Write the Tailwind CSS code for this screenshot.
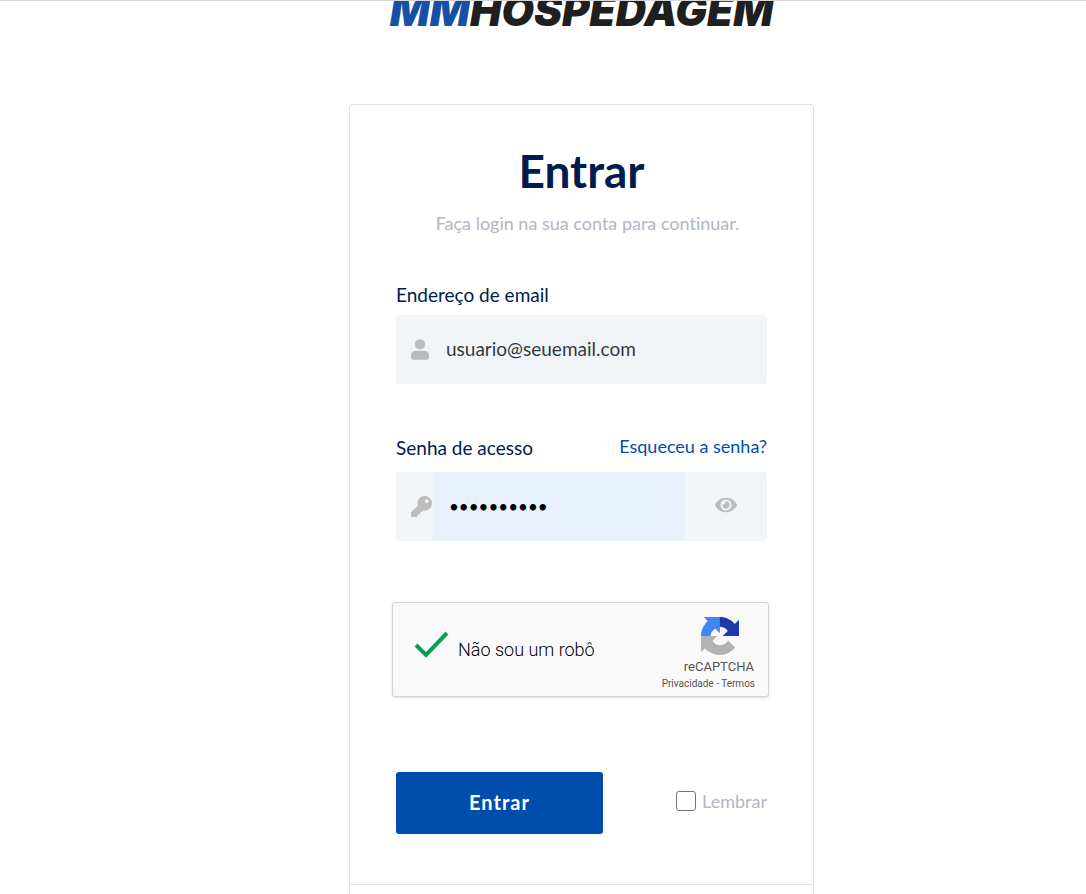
<!DOCTYPE html>
<html lang="pt-BR">
<head>
    <meta charset="UTF-8">
    <meta name="viewport" content="width=device-width, initial-scale=1.0">
    <title>Entrar - MMHospedagem</title>
    <script src="https://cdn.jsdelivr.net/npm/@tailwindcss/browser@4"></script>
</head>
<body class="min-h-screen flex flex-col bg-white border-t border-[#d6d6d6] font-['Lato','Open_Sans',sans-serif] [font-variant-ligatures:none] text-[#001b4e]">

    <header class="flex items-end justify-center h-[26px] pl-[77px] overflow-hidden">
        <a href="#" class="font-['Inter',sans-serif] font-black italic text-[42px] leading-[32px] text-[#1f1f1f]"><span class="text-[#1551a8]">MM</span>HOSPEDAGEM</a>
    </header>

    <main class="flex-1 flex flex-col items-center pt-[77px] pl-[77px]">
        <div class="flex-1 flex flex-col w-full max-w-[465px] border border-b-0 border-[#dfdfdf] rounded-t">
            <form class="px-[46px] pt-[38px] pb-[50px]" onsubmit="return false">
                <h1 class="text-center text-[46px] leading-[56px] font-bold">Entrar</h1>
                <p class="pl-3 mt-3 text-center text-[18px] leading-6 text-[#b4b4c4]">Faça login na sua conta para continuar.</p>

                <div class="mt-12">
                    <label for="email" class="block text-[19px] leading-6">Endereço de email</label>
                    <div class="mt-2 h-[69px] flex items-center rounded bg-[#f1f5f8] overflow-hidden">
                        <svg class="w-[18px] h-[21px] ml-[15px] shrink-0 fill-[#bcbcbc]" viewBox="0 0 448 512"><path d="M224 256c70.700 0 128-57.300 128-128S294.700 0 224 0 96 57.300 96 128s57.300 128 128 128zm96 32H128C48 288 0 340 0 410v54c0 26.500 21.500 48 48 48h352c26.500 0 48-21.500 48-48v-54c0-70-48-122-128-122z"/></svg>
                        <input type="email" id="email" value="usuario@seuemail.com" class="flex-1 min-w-0 h-full pl-[17px] pb-[2px] bg-transparent text-[19px] text-[#333840] outline-none">
                    </div>
                </div>

                <div class="mt-[52px]">
                    <div class="flex justify-between">
                        <label for="password" class="text-[19px] leading-6">Senha de acesso</label>
                        <a href="#" class="text-[18px] leading-5 text-[#004dac]">Esqueceu a senha?</a>
                    </div>
                    <div class="mt-3 h-[69px] flex items-center rounded bg-[#f1f5f8] overflow-hidden">
                        <svg class="w-[21px] h-[21px] ml-[15px] mr-px shrink-0 fill-[#bcbcbc]" viewBox="0 0 512 512"><path d="M512 176.001C512 273.203 433.202 352 336 352c-11.220 0-22.190-1.062-32.827-3.069l-24.012 27.014A23.999 23.999 0 0 1 261.223 384H224v40c0 13.255-10.745 24-24 24h-40v40c0 13.255-10.745 24-24 24H24c-13.255 0-24-10.745-24-24v-78.059c0-6.365 2.529-12.470 7.029-16.971l161.802-161.802C163.108 213.814 160 195.271 160 176 160 78.798 238.797.001 335.999 0 433.488-.001 512 78.511 512 176.001zM336 128c0 26.510 21.490 48 48 48s48-21.490 48-48-21.490-48-48-48-48 21.490-48 48z"/></svg>
                        <input type="password" id="password" value="senha12345" class="flex-1 min-w-0 h-full pl-4 bg-[#e8effd] text-[17px] text-black outline-none">
                        <button type="button" aria-label="Mostrar senha" class="w-[82px] h-full pb-1 flex items-center justify-center">
                            <svg class="w-[22px] h-5 fill-[#bcbcbc]" viewBox="0 0 576 512"><path d="M572.520 241.400C518.290 135.590 410.930 64 288 64S57.680 135.640 3.480 241.410a32.350 32.350 0 0 0 0 29.190C57.710 376.410 165.070 448 288 448s230.320-71.640 284.520-177.410a32.350 32.350 0 0 0 0-29.190zM288 400a144 144 0 1 1 144-144 143.930 143.930 0 0 1-144 144zm0-240a95.310 95.310 0 0 0-25.310 3.790 47.850 47.850 0 0 1-66.900 66.900A95.780 95.780 0 1 0 288 160z"/></svg>
                        </button>
                    </div>
                </div>

                <!-- captcha -->
                <div class="-ml-1 -mr-[2px] mt-[61px] h-[95px] flex items-start justify-between rounded-[3px] border border-[#d3d3d3] bg-[#f9f9f9] shadow-sm pr-[13px] font-['Roboto',sans-serif]">
                    <div class="flex pl-5 pt-7">
                        <svg class="w-9 h-7" viewBox="0 0 36 28" fill="none" stroke="#0a9d58" stroke-width="4"><path d="M3 14l10 10L34 2"/></svg>
                        <span class="pl-[9px] pt-[5px] text-[18px] leading-7 font-light text-black">Não sou um robô</span>
                    </div>
                    <div class="flex flex-col items-end pt-[14px] text-[#555]">
                        <svg class="w-[38px] h-[38px] mr-4" viewBox="0 0 64 64">
                            <path fill="#1c3aa9" d="M64 31.955a33 33 0 0 0-.037-1.427V4.639l-7.157 7.157C50.948 4.626 42.033.06 32.050.06c-10.390 0-19.622 4.945-25.458 12.604l11.730 11.854a15.550 15.550 0 0 1 4.754-5.334c2.050-1.600 4.952-2.906 8.968-2.906.485 0 .86.057 1.135.163 4.976.393 9.288 3.140 11.828 7.124l-8.304 8.304L64 31.955"/>
                            <path fill="#4285f4" d="M31.862.094a32 32 0 0 0-1.427.037H4.546l7.157 7.157C4.533 13.146-.034 22.060-.034 32.044c0 10.390 4.946 19.622 12.605 25.458l11.854-11.730a15.550 15.550 0 0 1-5.334-4.754c-1.600-2.050-2.906-4.952-2.906-8.968 0-.485.057-.86.163-1.135.393-4.976 3.140-9.288 7.124-11.828l8.304 8.304L31.862.094"/>
                            <path fill="#b2b2b2" d="M.001 32.045c0 .482.013.955.037 1.427v25.889l7.157-7.157c5.858 7.170 14.773 11.737 24.756 11.737 10.390 0 19.622-4.945 25.458-12.604l-11.730-11.854a15.550 15.550 0 0 1-4.754 5.334c-2.050 1.600-4.952 2.906-8.968 2.906-.485 0-.86-.057-1.135-.163-4.976-.393-9.288-3.140-11.828-7.124l8.304-8.304L.001 32.045"/>
                        </svg>
                        <span class="mt-1 pr-px text-[13px] leading-4">reCAPTCHA</span>
                        <span class="mt-px text-[10px] leading-4"><a href="#">Privacidade</a> - <a href="#">Termos</a></span>
                    </div>
                </div>

                <div class="mt-[75px] flex items-center justify-between">
                    <button type="submit" class="w-[207px] h-[62px] pb-[2px] rounded-[3px] bg-[#004dac] text-white text-[20px] font-bold tracking-wider">Entrar</button>
                    <label class="flex items-center gap-[6px] pb-1 text-[18px] leading-6 text-[#b4b4c4]">
                        <input type="checkbox" class="appearance-none w-5 h-5 rounded-[3px] border border-[#767676] bg-white">
                        Lembrar
                    </label>
                </div>
            </form>
            <div class="border-t border-[#e6e6e6]"></div>
        </div>
    </main>

</body>
</html>
